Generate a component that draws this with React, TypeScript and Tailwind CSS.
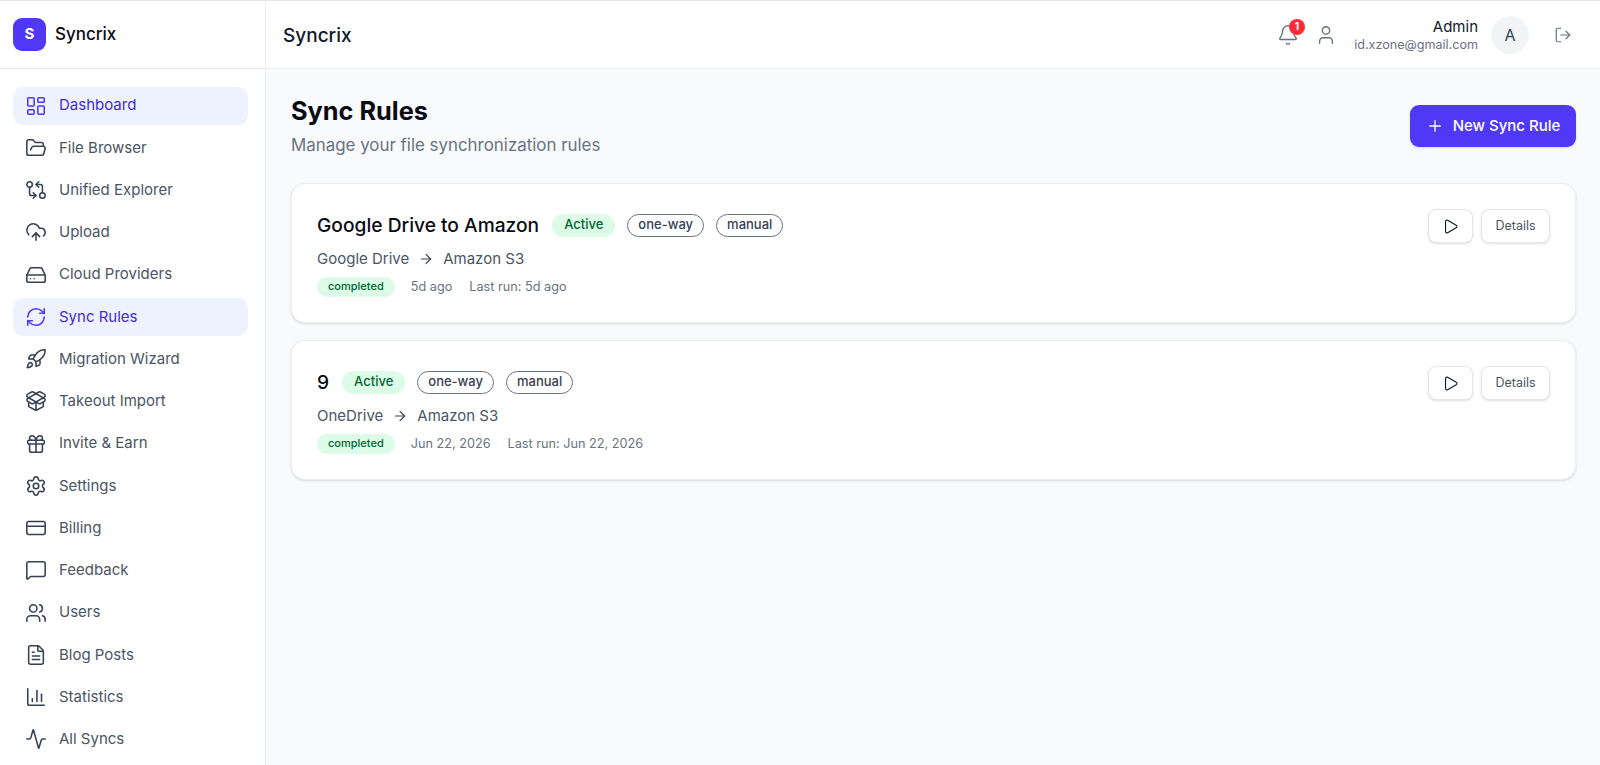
import React from 'react';
import {
  Activity,
  ArrowRight,
  Bell,
  ChartColumn,
  CloudUpload,
  CreditCard,
  FileText,
  FolderOpen,
  Gift,
  GitCompareArrows,
  HardDrive,
  LayoutDashboard,
  LogOut,
  MessageSquare,
  PackageOpen,
  Play,
  Plus,
  RefreshCw,
  Rocket,
  Settings,
  User,
  Users,
} from 'lucide-react';

const navItems = [
  { label: 'Dashboard', icon: LayoutDashboard, active: true },
  { label: 'File Browser', icon: FolderOpen },
  { label: 'Unified Explorer', icon: GitCompareArrows },
  { label: 'Upload', icon: CloudUpload },
  { label: 'Cloud Providers', icon: HardDrive },
  { label: 'Sync Rules', icon: RefreshCw, active: true },
  { label: 'Migration Wizard', icon: Rocket },
  { label: 'Takeout Import', icon: PackageOpen },
  { label: 'Invite & Earn', icon: Gift },
  { label: 'Settings', icon: Settings },
  { label: 'Billing', icon: CreditCard },
  { label: 'Feedback', icon: MessageSquare },
  { label: 'Users', icon: Users },
  { label: 'Blog Posts', icon: FileText },
  { label: 'Statistics', icon: ChartColumn },
  { label: 'All Syncs', icon: Activity },
];

const rules = [
  { name: 'Google Drive to Amazon', from: 'Google Drive', to: 'Amazon S3', ago: '5d ago', lastRun: 'Last run: 5d ago' },
  { name: '9', from: 'OneDrive', to: 'Amazon S3', ago: 'Jun 22, 2026', lastRun: 'Last run: Jun 22, 2026' },
];

const Sidebar: React.FC = () => (
  <aside className="w-[266px] shrink-0 bg-white border-r border-[#eceef1] flex flex-col">
    <div className="h-[68px] shrink-0 border-b border-[#e8eaed] flex items-center gap-[9px] pl-[13px]">
      <div className="w-[33px] h-[33px] rounded-[9px] bg-[#4f39f6] flex items-center justify-center text-white text-[15px] font-bold">
        S
      </div>
      <span className="text-[17px] font-medium text-[#0a0a14]">Syncrix</span>
    </div>
    <nav className="flex flex-col gap-[4.25px] pt-[17.5px] pl-[13px] pr-[17px]">
      {navItems.map(({ label, icon: Icon, active }) => (
        <div
          key={label}
          className={
            active
              ? 'h-[38px] rounded-[10px] bg-[#eef2ff] text-[#432dd7] flex items-center gap-[12px] px-[12px] text-[15px]'
              : 'h-[38px] rounded-[10px] text-[#4a5565] flex items-center gap-[12px] px-[12px] text-[15px]'
          }
        >
          <Icon className={active ? 'w-[22px] h-[22px] text-[#4f39f6]' : 'w-[22px] h-[22px] text-[#364153]'} strokeWidth={1.7} />
          {label}
        </div>
      ))}
    </nav>
  </aside>
);

const Header: React.FC = () => (
  <header className="h-[68px] shrink-0 bg-white border-b border-[#eceef1] flex items-center justify-between pl-[17px] pr-[28px]">
    <span className="mt-[3px] text-[19px] font-medium text-[#101828]">Syncrix</span>
    <div className="flex items-center">
      <div className="relative mr-[16px]">
        <Bell className="w-[22px] h-[22px] text-[#6a7282]" strokeWidth={1.6} />
        <span className="absolute -top-[5px] -right-[6px] w-[16px] h-[16px] rounded-full bg-[#fb2c36] text-white text-[10px] font-bold flex items-center justify-center">
          1
        </span>
      </div>
      <User className="w-[22px] h-[22px] text-[#6a7282]" strokeWidth={1.6} />
      <div className="ml-[16px] flex flex-col items-end w-[125px]">
        <span className="mt-[1px] text-[15px] leading-[20px] text-[#101828]">Admin</span>
        <span className="text-[12.6px] leading-[16px] text-[#6a7282]">id.xzone@gmail.com</span>
      </div>
      <div className="ml-[13px] w-[38px] h-[38px] rounded-full bg-[#f3f4f6] flex items-center justify-center text-[16px] text-[#364153]">
        A
      </div>
      <LogOut className="ml-[25px] w-[18px] h-[18px] text-[#6a7282]" strokeWidth={1.6} />
    </div>
  </header>
);

const RuleCard: React.FC<(typeof rules)[number]> = ({ name, from, to, ago, lastRun }) => (
  <div className="h-[140px] rounded-[14px] bg-white border border-[#eceef1] shadow-sm flex justify-between pt-[25px] pl-[25px] pr-[25px]">
    <div>
      <div className="flex items-center h-[30px] mt-[1px]">
        <span className="text-[19.2px] font-medium text-[#0a0a14]">{name}</span>
        <span className="ml-[13px] h-[23px] px-[12px] rounded-full bg-[#dcfce7] text-[#016630] text-[13px] font-medium flex items-center">
          Active
        </span>
        <span className="ml-[12px] h-[23px] px-[10px] rounded-full border border-[#6a7282] text-[#364153] text-[13px] font-medium flex items-center">
          one-way
        </span>
        <span className="ml-[12px] h-[23px] px-[10px] rounded-full border border-[#6a7282] text-[#364153] text-[13px] font-medium flex items-center">
          manual
        </span>
      </div>
      <div className="mt-[8px] flex items-center gap-[9px] text-[15px] text-[#4a5565]">
        {from}
        <ArrowRight className="w-[16px] h-[16px] text-[#364153]" strokeWidth={1.7} />
        {to}
      </div>
      <div className="mt-[6px] flex items-center text-[12.7px] text-[#6a7282]">
        <span className="h-[20px] px-[11px] rounded-full bg-[#dcfce7] text-[#016630] text-[11px] font-medium flex items-center">
          completed
        </span>
        <span className="ml-[16px]">{ago}</span>
        <span className="ml-[17px]">{lastRun}</span>
      </div>
    </div>
    <div className="flex gap-[8px] items-start">
      <button className="w-[45px] h-[34px] rounded-[8px] bg-white border border-[#e5e7eb] shadow-sm flex items-center justify-center">
        <Play className="w-[17px] h-[17px] text-[#101828]" strokeWidth={1.6} />
      </button>
      <button className="w-[69px] h-[34px] rounded-[8px] bg-white border border-[#e5e7eb] shadow-sm flex items-center justify-center text-[12.5px] text-[#4a5565]">
        Details
      </button>
    </div>
  </div>
);

export default function App() {
  return (
    <div className="h-screen flex overflow-hidden border-t border-[#e5e7eb] bg-[#f9fafb] font-['Inter',sans-serif]">
      <Sidebar />
      <div className="flex-1 min-w-0 flex flex-col">
        <Header />
        <main className="flex-1 pt-[24px] pl-[25px] pr-[24px]">
          <div className="flex items-start justify-between mb-[26px]">
            <div>
              <h1 className="text-[25.3px] leading-[36px] font-bold text-[#0a0a14]">Sync Rules</h1>
              <p className="mt-[4px] text-[16.9px] leading-[24px] text-[#6a7282]">
                Manage your file synchronization rules
              </p>
            </div>
            <button className="mt-[12px] w-[166px] h-[42px] rounded-[9px] bg-[#4f39f6] text-white text-[15px] font-medium flex items-center justify-center gap-[9px] shadow-sm">
              <Plus className="w-[18px] h-[18px]" strokeWidth={1.8} />
              New Sync Rule
            </button>
          </div>
          <div className="flex flex-col gap-[17px]">
            {rules.map((rule) => (
              <RuleCard key={rule.name} {...rule} />
            ))}
          </div>
        </main>
      </div>
    </div>
  );
}
